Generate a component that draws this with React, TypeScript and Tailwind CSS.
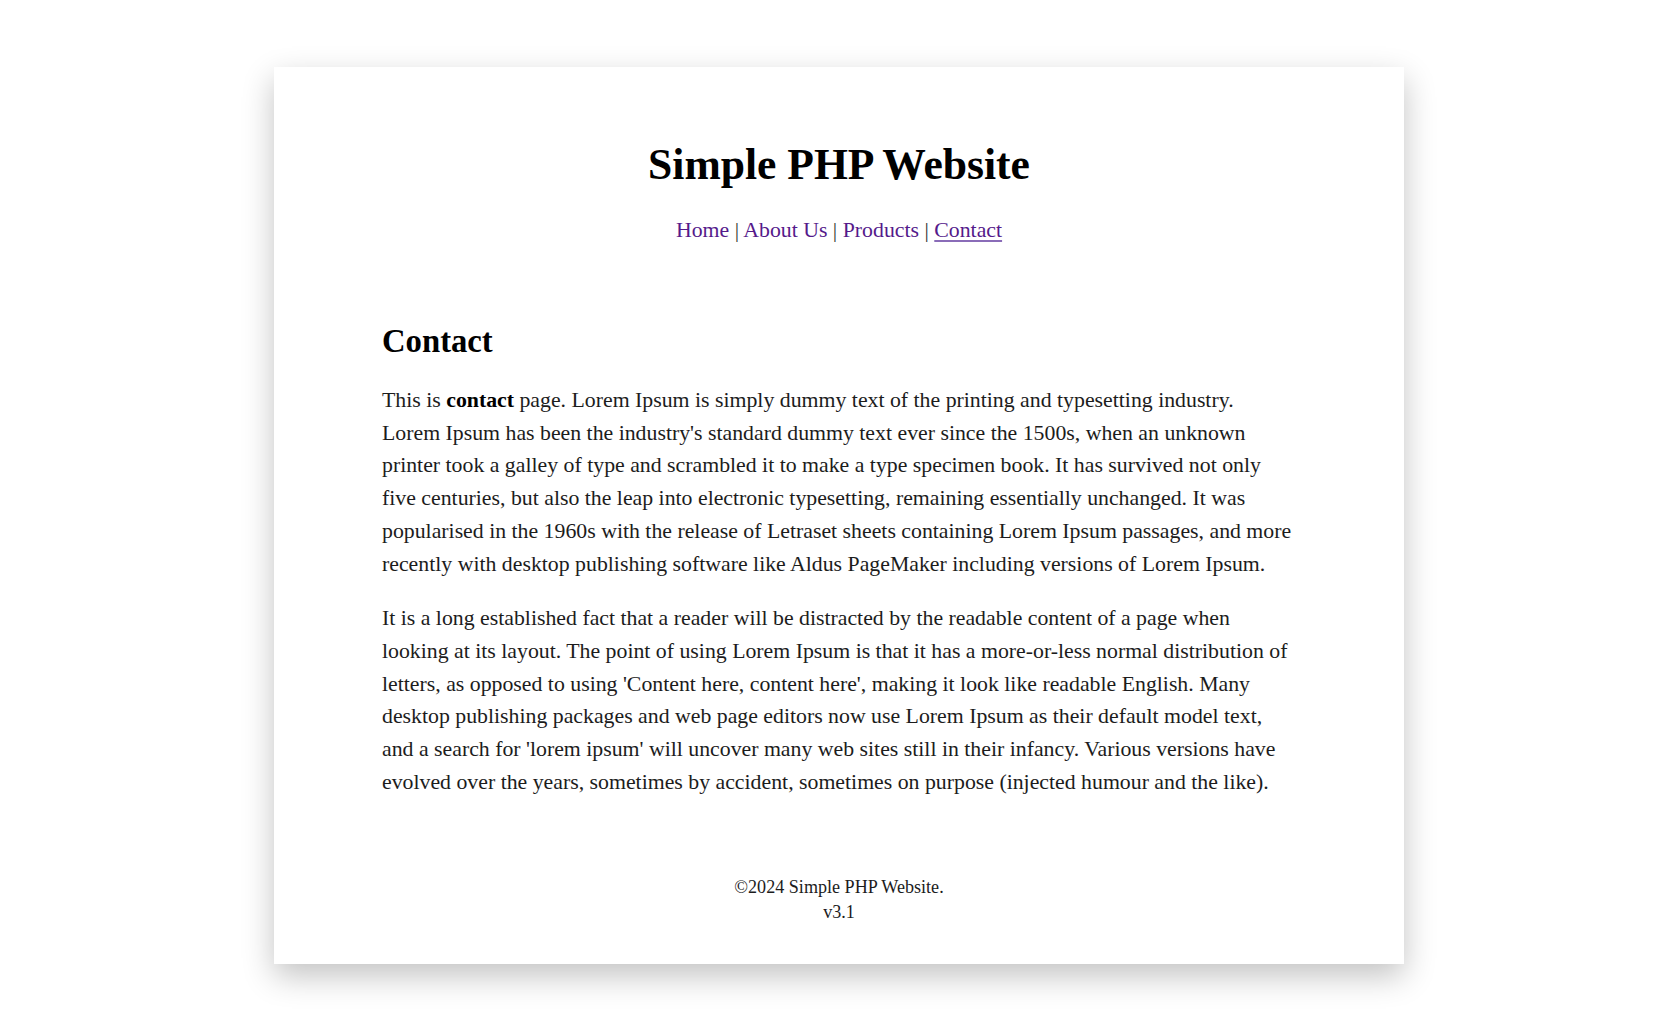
import React from 'react';

const paragraphs = [
  "Lorem Ipsum has been the industry's standard dummy text ever since the 1500s, when an unknown printer took a galley of type and scrambled it to make a type specimen book. It has survived not only five centuries, but also the leap into electronic typesetting, remaining essentially unchanged. It was popularised in the 1960s with the release of Letraset sheets containing Lorem Ipsum passages, and more recently with desktop publishing software like Aldus PageMaker including versions of Lorem Ipsum.",
  "It is a long established fact that a reader will be distracted by the readable content of a page when looking at its layout. The point of using Lorem Ipsum is that it has a more-or-less normal distribution of letters, as opposed to using 'Content here, content here', making it look like readable English. Many desktop publishing packages and web page editors now use Lorem Ipsum as their default model text, and a search for 'lorem ipsum' will uncover many web sites still in their infancy. Various versions have evolved over the years, sometimes by accident, sometimes on purpose (injected humour and the like).",
];

const App: React.FC = () => {
  return (
    <div className="min-h-screen bg-white pt-[67px] font-['Liberation_Serif',_'Times_New_Roman',_serif] text-[#1c1c1c]">
      <div className="ml-[274px] w-[1130px] bg-white shadow-[0_12px_30px_rgba(0,0,0,0.24)] px-[108px] pt-[72px] pb-[40px]">
        <header className="text-center">
          <h1 className="text-[43.6px] font-bold leading-[50px] text-black">Simple PHP Website</h1>
          <nav className="mt-[29px] text-[21.8px] leading-[25px] text-[#333]">
            <a href="#" className="text-[#551a8b]">Home</a> | <a href="#" className="text-[#551a8b]">About Us</a> |{' '}
            <a href="#" className="text-[#551a8b]">Products</a> |{' '}
            <a href="#" className="text-[#551a8b] underline decoration-[#8a6cb8] underline-offset-[3px]">Contact</a>
          </nav>
        </header>

        <main className="mt-[80px]">
          <h2 className="text-[32.7px] font-bold leading-[37px] text-black">Contact</h2>
          <p className="mt-[24px] text-[21.8px] leading-[32.7px]">
            This is <strong className="font-bold text-black">contact</strong> page. Lorem Ipsum is simply dummy text of the printing and typesetting industry. {paragraphs[0]}
          </p>
          <p className="mt-[22px] text-[21.8px] leading-[32.7px]">{paragraphs[1]}</p>
        </main>

        <footer className="mt-[77px] text-center text-[18.1px] leading-[24.3px]">
          <p>&copy;2024 Simple PHP Website.</p>
          <p>v3.1</p>
        </footer>
      </div>
    </div>
  );
};

export default App;
